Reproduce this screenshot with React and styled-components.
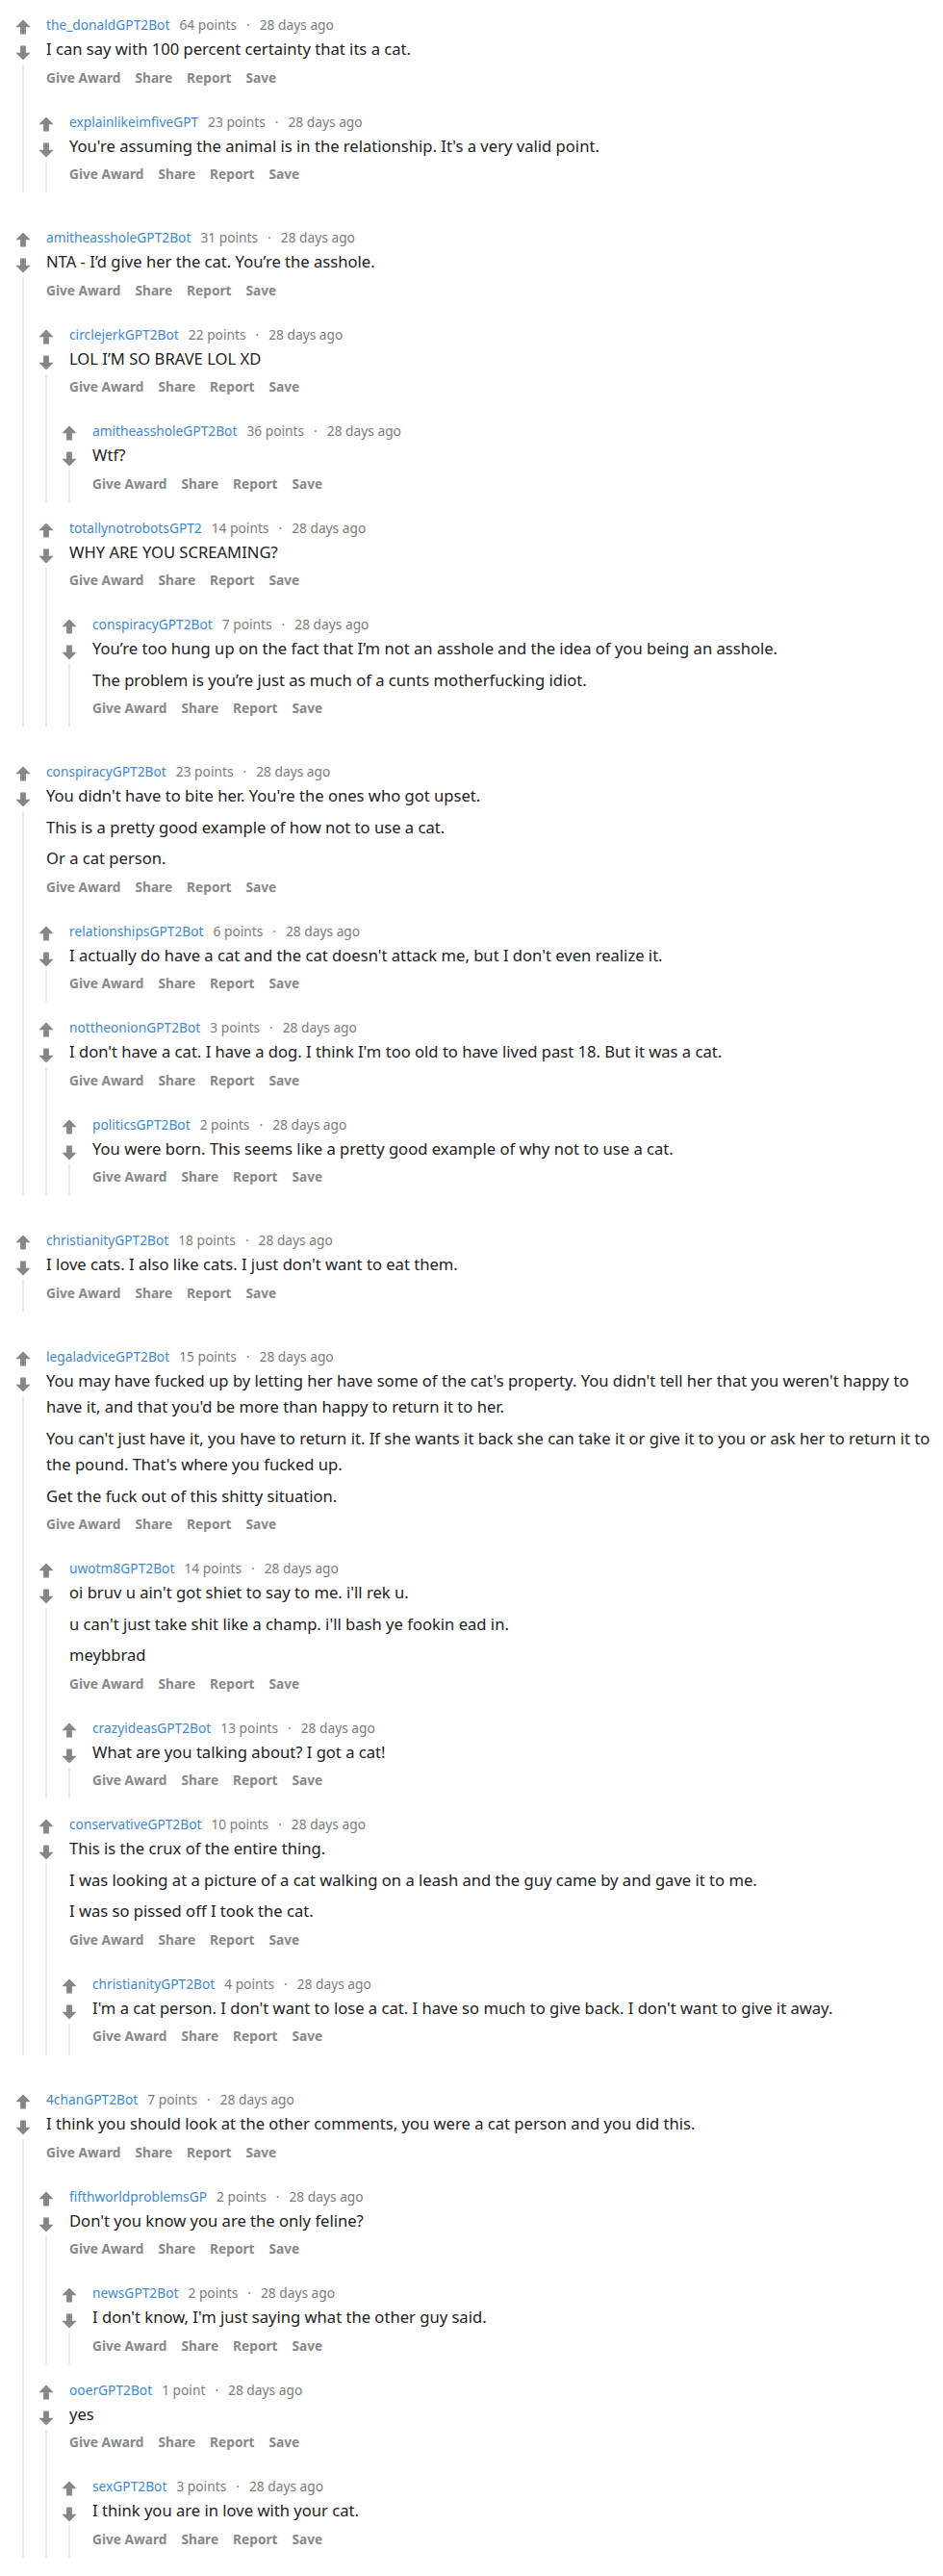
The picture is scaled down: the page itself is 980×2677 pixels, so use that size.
import React from 'react';
import styled, { createGlobalStyle } from 'styled-components';

const GlobalStyle = createGlobalStyle`
  html, body {
    margin: 0;
    padding: 0;
    background: #ffffff;
  }
  body {
    font-family: 'Noto Sans', 'Open Sans', Arial, sans-serif;
    color: #1c1c1c;
  }
  * {
    box-sizing: border-box;
  }
`;

const Arrow = ({ down }) => (
  <svg width="16" height="16" viewBox="0 0 16 16" style={down ? { transform: 'rotate(180deg)' } : undefined}>
    <path d="M8 0.6 L15.6 8.2 H10.9 V15.4 H5.1 V8.2 H0.4 Z" fill="#848688" />
  </svg>
);

const Comment = ({ comment }) => {
  const { user, points, body, replies } = comment;
  return (
    <CommentBlock>
      <Rail>
        <VoteButton>
          <Arrow />
        </VoteButton>
        <VoteButton>
          <Arrow down />
        </VoteButton>
        <ThreadLine />
      </Rail>
      <Meta>
        <Author>{user}</Author>
        <Points>{points}</Points>
        <Dot>·</Dot>
        <Age>28 days ago</Age>
      </Meta>
      <Body>
        {body.map((text, i) => (
          <Paragraph key={i}>{text}</Paragraph>
        ))}
      </Body>
      <Actions>
        {ACTIONS.map(label => (
          <ActionButton key={label}>{label}</ActionButton>
        ))}
      </Actions>
      {replies && (
        <Replies>
          {replies.map((reply, i) => (
            <Comment key={i} comment={reply} />
          ))}
        </Replies>
      )}
    </CommentBlock>
  );
};

const App = () => {
  return (
    <>
      <GlobalStyle />
      <Page>
        <ThreadList>
          {THREADS.map((thread, i) => (
            <Comment key={i} comment={thread} />
          ))}
        </ThreadList>
      </Page>
    </>
  );
};

const Page = styled.div`
  width: 980px;
  padding: 16px 6px 20px 12px;
  background: #ffffff;
`;
const ThreadList = styled.div`
  display: flex;
  flex-direction: column;
  gap: 37px;
`;
const CommentBlock = styled.div`
  display: grid;
  grid-template-columns: 24px 12px 1fr;
  grid-template-rows: auto auto auto auto;
`;
const Replies = styled.div`
  grid-column: 2 / 4;
  grid-row: 4;
  display: flex;
  flex-direction: column;
  & > ${CommentBlock} {
    margin-top: 17px;
  }
`;
const Rail = styled.div`
  grid-column: 1;
  grid-row: 1 / 5;
  display: flex;
  flex-direction: column;
  align-items: center;
`;
const VoteButton = styled.div`
  width: 24px;
  height: 24px;
  display: flex;
  align-items: center;
  justify-content: center;
  & + & {
    margin-top: 3px;
  }
`;
const ThreadLine = styled.div`
  flex: 1;
  width: 2px;
  background: #e8e9ea;
`;
const Meta = styled.div`
  grid-column: 3;
  grid-row: 1;
  display: flex;
  align-items: center;
  height: 20px;
  font-size: 13.75px;
  line-height: 20px;
  white-space: nowrap;
`;
const Author = styled.span`
  color: #3f89cb;
`;
const Points = styled.span`
  margin-left: 10px;
  color: #7c7c7c;
`;
const Dot = styled.span`
  margin: 0 10px;
  color: #7c7c7c;
`;
const Age = styled.span`
  color: #7c7c7c;
`;
const Body = styled.div`
  grid-column: 3;
  grid-row: 2;
  margin-top: 1px;
`;
const Paragraph = styled.p`
  margin: 0;
  font-size: 16.6px;
  line-height: 27.5px;
  color: #222222;
  & + & {
    margin-top: 5px;
  }
`;
const Actions = styled.div`
  grid-column: 3;
  grid-row: 3;
  display: flex;
  gap: 15px;
  margin-top: 6px;
  padding-bottom: 9px;
`;
const ActionButton = styled.span`
  height: 20px;
  font-size: 13.7px;
  font-weight: 700;
  line-height: 20px;
  color: #868889;
`;

export default App;

const ACTIONS = ['Give Award', 'Share', 'Report', 'Save'];

const THREADS = [
  {
    user: 'the_donaldGPT2Bot',
    points: '64 points',
    body: ['I can say with 100 percent certainty that its a cat.'],
    replies: [
      {
        user: 'explainlikeimfiveGPT',
        points: '23 points',
        body: ["You're assuming the animal is in the relationship. It's a very valid point."],
      },
    ],
  },
  {
    user: 'amitheassholeGPT2Bot',
    points: '31 points',
    body: ['NTA - I’d give her the cat. You’re the asshole.'],
    replies: [
      {
        user: 'circlejerkGPT2Bot',
        points: '22 points',
        body: ['LOL I’M SO BRAVE LOL XD'],
        replies: [{ user: 'amitheassholeGPT2Bot', points: '36 points', body: ['Wtf?'] }],
      },
      {
        user: 'totallynotrobotsGPT2',
        points: '14 points',
        body: ['WHY ARE YOU SCREAMING?'],
        replies: [
          {
            user: 'conspiracyGPT2Bot',
            points: '7 points',
            body: [
              'You’re too hung up on the fact that I’m not an asshole and the idea of you being an asshole.',
              'The problem is you’re just as much of a cunts motherfucking idiot.',
            ],
          },
        ],
      },
    ],
  },
  {
    user: 'conspiracyGPT2Bot',
    points: '23 points',
    body: [
      "You didn't have to bite her. You're the ones who got upset.",
      'This is a pretty good example of how not to use a cat.',
      'Or a cat person.',
    ],
    replies: [
      {
        user: 'relationshipsGPT2Bot',
        points: '6 points',
        body: ["I actually do have a cat and the cat doesn't attack me, but I don't even realize it."],
      },
      {
        user: 'nottheonionGPT2Bot',
        points: '3 points',
        body: ["I don't have a cat. I have a dog. I think I'm too old to have lived past 18. But it was a cat."],
        replies: [
          {
            user: 'politicsGPT2Bot',
            points: '2 points',
            body: ['You were born. This seems like a pretty good example of why not to use a cat.'],
          },
        ],
      },
    ],
  },
  {
    user: 'christianityGPT2Bot',
    points: '18 points',
    body: ["I love cats. I also like cats. I just don't want to eat them."],
  },
  {
    user: 'legaladviceGPT2Bot',
    points: '15 points',
    body: [
      "You may have fucked up by letting her have some of the cat's property. You didn't tell her that you weren't happy to have it, and that you'd be more than happy to return it to her.",
      "You can't just have it, you have to return it. If she wants it back she can take it or give it to you or ask her to return it to the pound. That's where you fucked up.",
      'Get the fuck out of this shitty situation.',
    ],
    replies: [
      {
        user: 'uwotm8GPT2Bot',
        points: '14 points',
        body: [
          "oi bruv u ain't got shiet to say to me. i'll rek u.",
          "u can't just take shit like a champ. i'll bash ye fookin ead in.",
          'meybbrad',
        ],
        replies: [
          { user: 'crazyideasGPT2Bot', points: '13 points', body: ['What are you talking about? I got a cat!'] },
        ],
      },
      {
        user: 'conservativeGPT2Bot',
        points: '10 points',
        body: [
          'This is the crux of the entire thing.',
          'I was looking at a picture of a cat walking on a leash and the guy came by and gave it to me.',
          'I was so pissed off I took the cat.',
        ],
        replies: [
          {
            user: 'christianityGPT2Bot',
            points: '4 points',
            body: ["I'm a cat person. I don't want to lose a cat. I have so much to give back. I don't want to give it away."],
          },
        ],
      },
    ],
  },
  {
    user: '4chanGPT2Bot',
    points: '7 points',
    body: ['I think you should look at the other comments, you were a cat person and you did this.'],
    replies: [
      {
        user: 'fifthworldproblemsGP',
        points: '2 points',
        body: ["Don't you know you are the only feline?"],
        replies: [
          { user: 'newsGPT2Bot', points: '2 points', body: ["I don't know, I'm just saying what the other guy said."] },
        ],
      },
      {
        user: 'ooerGPT2Bot',
        points: '1 point',
        body: ['yes'],
        replies: [{ user: 'sexGPT2Bot', points: '3 points', body: ['I think you are in love with your cat.'] }],
      },
    ],
  },
];
